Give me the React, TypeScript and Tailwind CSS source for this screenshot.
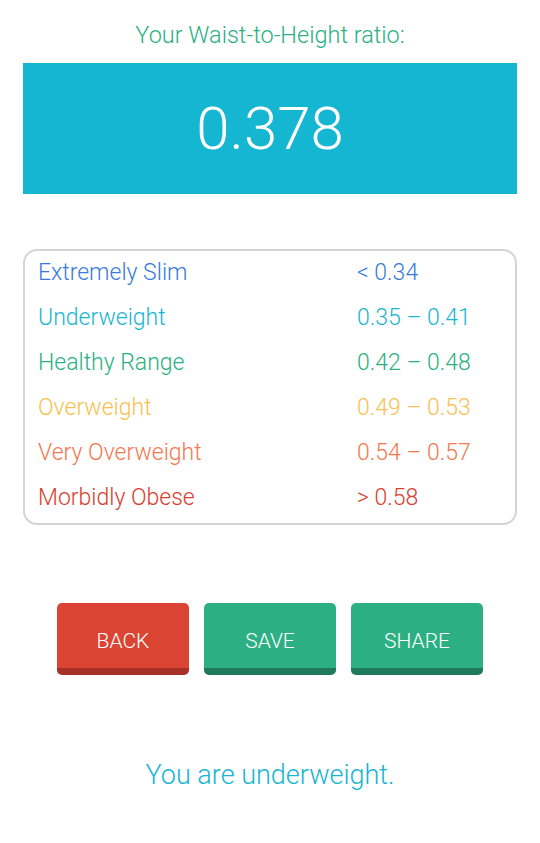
import React from 'react'

const ranges = [
  { label: 'Extremely Slim', value: '< 0.34', color: 'text-[#3a7adb]' },
  { label: 'Underweight', value: '0.35 – 0.41', color: 'text-[#17b5d3]' },
  { label: 'Healthy Range', value: '0.42 – 0.48', color: 'text-[#2bb07f]' },
  { label: 'Overweight', value: '0.49 – 0.53', color: 'text-[#f8c150]' },
  { label: 'Very Overweight', value: '0.54 – 0.57', color: 'text-[#f4774e]' },
  { label: 'Morbidly Obese', value: '> 0.58', color: 'text-[#d9402f]' },
]

function ActionButton({ label, tone }: { label: string; tone: 'red' | 'green' }) {
  const cls =
    tone === 'red'
      ? 'bg-[#db4332] border-[#a8302a]'
      : 'bg-[#2cb083] border-[#1f7a59]'
  return (
    <button
      className={`${cls} w-[132px] h-[72px] rounded-[5px] border-b-[7px] text-white text-[21px] font-light uppercase flex items-center justify-center pt-[12px]`}
    >
      {label}
    </button>
  )
}

export default function App() {
  return (
    <div className="w-[540px] h-[843px] bg-white px-[23px] font-['Roboto',sans-serif] font-light">
      <p className="text-center text-[23.5px] text-[#2bb07f] pt-[21px] leading-[28px]">
        Your Waist-to-Height ratio:
      </p>

      <div className="mt-[14px] h-[131px] bg-[#14b6d2] flex items-center justify-center">
        <span className="text-white text-[60px] font-light leading-none">0.378</span>
      </div>

      <div className="mt-[55px] border-2 border-[#d4d4d4] rounded-[14px] pl-[13px] pb-[2px]">
        {ranges.map(r => (
          <div key={r.label} className={`flex items-center h-[45px] text-[23px] ${r.color}`}>
            <span className="w-[319px]">{r.label}</span>
            <span>{r.value}</span>
          </div>
        ))}
      </div>

      <div className="mt-[78px] flex justify-center gap-[15px]">
        <ActionButton label="Back" tone="red" />
        <ActionButton label="Save" tone="green" />
        <ActionButton label="Share" tone="green" />
      </div>

      <p className="mt-[83px] text-center text-[27px] text-[#17b5d3] leading-[34px]">
        You are underweight.
      </p>
    </div>
  )
}
